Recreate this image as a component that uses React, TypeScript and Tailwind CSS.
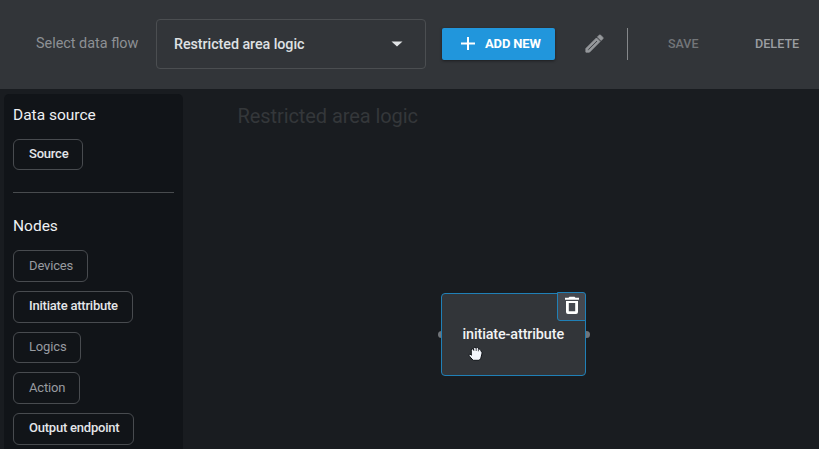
type SourceItem = { label: string; active: boolean; size: string };

const nodes: SourceItem[] = [
  { label: "Devices", active: false, size: "w-[75px] h-8 mb-[9px] pb-px" },
  { label: "Initiate attribute", active: true, size: "w-[120px] h-8 mb-[9px] pb-[3px]" },
  { label: "Logics", active: false, size: "w-[68px] h-[31px] mb-[9px] pb-[3px]" },
  { label: "Action", active: false, size: "w-[67px] h-8 mb-[9px] pb-px" },
  { label: "Output endpoint", active: true, size: "w-[121px] h-8 pb-[3px]" },
];

function Chip({ label, active, size }: SourceItem) {
  return (
    <button
      className={`flex shrink-0 items-center whitespace-nowrap rounded-[6px] border border-[#484b4f] pl-[15px] text-[13px] leading-none ${active ? "font-medium tracking-[-0.22px] text-[#e4e6e9]" : "tracking-[-0.15px] text-[#989ba0]"} ${size}`}
    >
      {label}
    </button>
  );
}

function Toolbar() {
  return (
    <header className="flex h-[89px] shrink-0 items-start bg-[#323539] text-[14px]">
      <span className="ml-9 mt-[34px] w-[120px] whitespace-nowrap text-[14.4px] leading-5 text-[#8d9094]">Select data flow</span>
      <button className="mt-[19px] flex h-[50px] w-[270px] items-center justify-between rounded-[4px] border border-[#4b4e51] pl-[17px] pr-[22px] text-[#dfe1e4]">
        <span className="pt-px text-[14.3px] font-medium tracking-[-0.05px]">Restricted area logic</span>
        <svg width="12" height="6" viewBox="0 0 12 6" fill="#e1e4e6">
          <path d="M.5.5h11L6 5.5z" />
        </svg>
      </button>
      <button className="ml-4 mt-7 flex h-8 w-[113px] items-center rounded-[2px] bg-[#2196dc] pl-[19px] text-[13px] font-bold text-white shadow-[0_1px_3px_rgba(0,0,0,0.45)]">
        <svg width="14" height="14" viewBox="0 0 14 14" fill="none" stroke="white" strokeWidth="2">
          <path d="M7 0v13M0 6.5h14" />
        </svg>
        <span className="ml-[10px] whitespace-nowrap tracking-[-0.15px]">ADD NEW</span>
      </button>
      <svg className="ml-[28px] mt-8" width="23" height="23" viewBox="0 0 24 24" fill="#96999c">
        <path d="M14.06 9.02l.92.92L5.92 19H5v-.92l9.06-9.06M17.66 3c-.25 0-.51.1-.7.29l-1.83 1.83 3.75 3.75 1.83-1.83c.39-.39.39-1.02 0-1.41l-2.34-2.34c-.2-.2-.45-.29-.71-.29zm-3.6 3.19L3 17.25V21h3.75L17.81 9.94l-3.75-3.75z" stroke="#96999c" strokeWidth=".9" />
      </svg>
      <div className="ml-[21px] mt-7 h-8 w-px bg-[#85888b]" />
      <button className="ml-[40px] mt-[34px] w-[87px] text-left text-[12.5px] font-medium leading-5 text-[#737679]">SAVE</button>
      <button className="mt-[34px] text-[12.6px] font-medium leading-5 text-[#9b9ea1]">DELETE</button>
    </header>
  );
}

function FlowNode() {
  return (
    <div className="absolute left-[437px] top-[204px] h-[84px] w-[153px]">
      <div className="absolute left-[0.5px] top-[38px] size-[7px] rounded-full bg-[#707479]" />
      <div className="absolute right-[0.5px] top-[38px] size-[7px] rounded-full bg-[#707479]" />
      <div className="absolute left-[4px] top-0 flex h-[83px] w-[144.5px] items-center justify-center rounded-[4px] border border-[#2080b7] bg-[#323539]">
        <span className="whitespace-nowrap text-[14.4px] font-medium tracking-[-0.12px] text-[#f1f2f3]">initiate-attribute</span>
      </div>
      <button className="absolute left-[120px] top-[-1px] flex h-[29px] w-[29px] items-start justify-center rounded-[3px] rounded-tl-none rounded-br-none border border-[#2080b7] bg-[#45484f] pt-[3px]">
        <svg className="shrink-0" width="16" height="19" viewBox="0 0 16 19">
          <path fill="#fff" fillRule="evenodd" d="M5.5.8h5l1 1H15v2H1v-2h3.5zM2 5h12v11a2 2 0 0 1-2 2H4a2 2 0 0 1-2-2zM4.8 7v8.2h6.4V7z" />
        </svg>
      </button>
      <svg className="absolute left-[31px] top-[53px]" width="15" height="16" viewBox="0 0 15 16">
        <path d="M3.3 9V4.2Q3.3 2.7 4.5 2.9T5.6 4V2.4Q5.8 1 7 1.2T8.1 2.5Q8.4 1.1 9.6 1.6T10.5 3.2Q12 2.6 12.6 4.1L13.6 6Q14.4 6.3 13.9 8L12.8 12.3 11.2 14.3H5.2L2 10.9Q.6 9.2 1.2 8.4T3.3 9Z" fill="#f3f6fc" stroke="#111418" strokeWidth="1" />
        <path d="M5.8 3.7V5M8.2 2.7V5M10.4 3.4v1.9M3.5 8v1.5" stroke="#24272b" strokeWidth=".8" />
      </svg>
    </div>
  );
}

export default function App() {
  return (
    <div className="flex h-[449px] w-[819px] flex-col overflow-hidden bg-[#191c20] font-[Roboto,sans-serif]">
      <Toolbar />
      <main className="relative flex h-[360px]">
        <aside className="ml-1 mt-[5px] flex h-[355px] w-[179px] shrink-0 flex-col items-start rounded-t-[5px] bg-[#111418] px-[9px]">
          <h2 className="mt-[10px] text-[15.5px] leading-[22px] text-[#eef0f3]">Data source</h2>
          <Chip label="Source" active size="mt-[13px] w-[70px] h-[31px] pb-[3px]" />
          <div className="mt-[22px] h-px w-full shrink-0 bg-[#484b4e]" />
          <h2 className="mt-[22px] mb-[13px] text-[15.5px] leading-[22px] text-[#eef0f3]">Nodes</h2>
          {nodes.map((node) => <Chip key={node.label} {...node} />)}
        </aside>
        <h1 className="ml-[54.5px] mt-[13px] whitespace-nowrap text-[20px] leading-7 tracking-[-0.08px] text-[#34373a]">Restricted area logic</h1>
        <FlowNode />
      </main>
    </div>
  );
}
